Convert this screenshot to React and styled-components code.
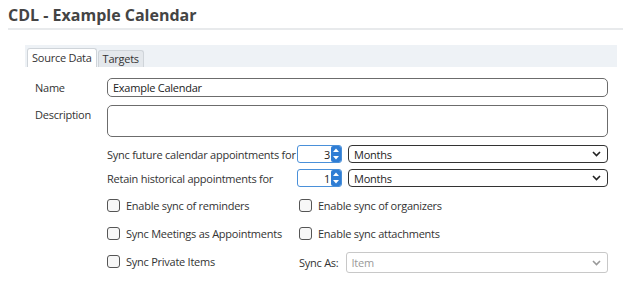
import React from 'react';
import styled, { createGlobalStyle } from 'styled-components';

const GlobalStyle = createGlobalStyle`
  body {
    margin: 0;
    background: #fff;
    font-family: 'Open Sans', 'Noto Sans', sans-serif;
    letter-spacing: -0.25px;
    color: #222;
  }
`;

const Page = styled.div`
  width: 635px;
  height: 296px;
  padding: 4px 8px 0 8px;
  box-sizing: border-box;
`;

const Title = styled.h1`
  margin: 0;
  font-size: 16px;
  font-weight: 700;
  letter-spacing: 0;
  color: #444;
  line-height: 22px;
  padding-bottom: 2px;
  border-bottom: 2px solid #e8eaec;
  margin-right: 4px;
`;

const Panel = styled.div`
  margin: 15px 10px 0 17px;
`;

const TabStrip = styled.div`
  display: flex;
  align-items: flex-end;
  height: 22px;
  background: #eef2f6;
  padding-left: 2px;
`;

const Tab = styled.div`
  font-size: 11px;
  padding: 0 4px;
  height: ${(p) => (p.active ? '18px' : '16px')};
  line-height: ${(p) => (p.active ? '18px' : '16px')};
  background: ${(p) => (p.active ? '#fff' : '#e4e8ec')};
  border: 1px solid #cfd4d9;
  border-bottom: none;
  border-radius: 3px 3px 0 0;
  color: #333;
  margin-right: 1px;
`;

const Form = styled.div`
  padding: 11px 9px 0 10px;
  display: grid;
  grid-template-columns: 72px 1fr;
  row-gap: 8px;
`;

const Label = styled.div`
  font-size: 11px;
  line-height: 19px;
  color: #333;
`;

const TextBox = styled.div`
  height: ${(p) => p.h || 19}px;
  box-sizing: border-box;
  border: 1px solid #6c6c6c;
  border-radius: 5px;
  font-size: 11px;
  line-height: 17px;
  padding: 0 5px;
  color: #222;
`;

const Settings = styled.div`
  grid-column: 2;
  display: flex;
  flex-direction: column;
  gap: 6px;
`;

const SettingRow = styled.div`
  display: flex;
  align-items: center;
  height: 18px;
`;

const RowLabel = styled.div`
  width: 190px;
  font-size: 11px;
  color: #333;
  white-space: nowrap;
`;

const Spinner = styled.div`
  width: 45px;
  height: 18px;
  box-sizing: border-box;
  border: 1px solid #4a90d9;
  border-radius: 3px;
  display: flex;
  align-items: center;
  justify-content: flex-end;
  font-size: 11px;
  color: #222;
  margin-right: 6px;
`;

const SpinValue = styled.span`
  padding-right: 1px;
`;

const SpinButtons = styled.div`
  width: 10px;
  height: 16px;
  background: #2f7dd4;
  border-radius: 2px;
  display: flex;
  flex-direction: column;
  align-items: center;
  justify-content: space-around;
`;

const Select = styled.div`
  flex: 1;
  height: ${(p) => p.h || 18}px;
  box-sizing: border-box;
  border: 1px solid ${(p) => (p.disabled ? '#c8c8c8' : '#333')};
  border-radius: ${(p) => (p.disabled ? 3 : 4)}px;
  display: flex;
  align-items: center;
  justify-content: space-between;
  padding: 0 6px 0 5px;
  font-size: 11px;
  color: ${(p) => (p.disabled ? '#9a9a9a' : '#222')};
`;

const CheckGrid = styled.div`
  display: grid;
  grid-template-columns: 192px 1fr;
  row-gap: 10px;
  margin-top: 3px;
`;

const CheckItem = styled.label`
  display: flex;
  align-items: center;
  gap: 6px;
  height: 18px;
  font-size: 11px;
  color: #333;
`;

const Box = styled.span`
  width: 11px;
  height: 11px;
  border: 1px solid #555;
  border-radius: 3px;
  background: #f7f7f7;
`;

const SyncAs = styled.div`
  display: flex;
  align-items: center;
  gap: 7px;
  height: 21px;
  font-size: 11px;
  color: #333;
`;

const Chevron = ({ color = '#222' }) => (
  <svg width="9" height="6" viewBox="0 0 9 6">
    <path d="M1 1l3.5 3.5L8 1" fill="none" stroke={color} strokeWidth="1.6" />
  </svg>
);

const Arrows = () => (
  <SpinButtons>
    <svg width="6" height="4" viewBox="0 0 6 4">
      <path d="M0 4L3 0.5L6 4z" fill="#fff" />
    </svg>
    <svg width="6" height="4" viewBox="0 0 6 4">
      <path d="M0 0L3 3.5L6 0z" fill="#fff" />
    </svg>
  </SpinButtons>
);

const Check = ({ children }) => (
  <CheckItem>
    <Box />
    {children}
  </CheckItem>
);

const App = () => (
  <Page>
    <GlobalStyle />
    <Title>CDL - Example Calendar</Title>
    <Panel>
      <TabStrip>
        <Tab active>Source Data</Tab>
        <Tab>Targets</Tab>
      </TabStrip>
      <Form>
        <Label>Name</Label>
        <TextBox>Example Calendar</TextBox>
        <Label>Description</Label>
        <TextBox h={32} />
        <Settings>
          <SettingRow>
            <RowLabel>Sync future calendar appointments for</RowLabel>
            <Spinner>
              <SpinValue>3</SpinValue>
              <Arrows />
            </Spinner>
            <Select>
              Months
              <Chevron />
            </Select>
          </SettingRow>
          <SettingRow>
            <RowLabel>Retain historical appointments for</RowLabel>
            <Spinner>
              <SpinValue>1</SpinValue>
              <Arrows />
            </Spinner>
            <Select>
              Months
              <Chevron />
            </Select>
          </SettingRow>
          <CheckGrid>
            <Check>Enable sync of reminders</Check>
            <Check>Enable sync of organizers</Check>
            <Check>Sync Meetings as Appointments</Check>
            <Check>Enable sync attachments</Check>
            <Check>Sync Private Items</Check>
            <SyncAs>
              Sync As:
              <Select disabled h={21}>
                Item
                <Chevron color="#999" />
              </Select>
            </SyncAs>
          </CheckGrid>
        </Settings>
      </Form>
    </Panel>
  </Page>
);

export default App;
